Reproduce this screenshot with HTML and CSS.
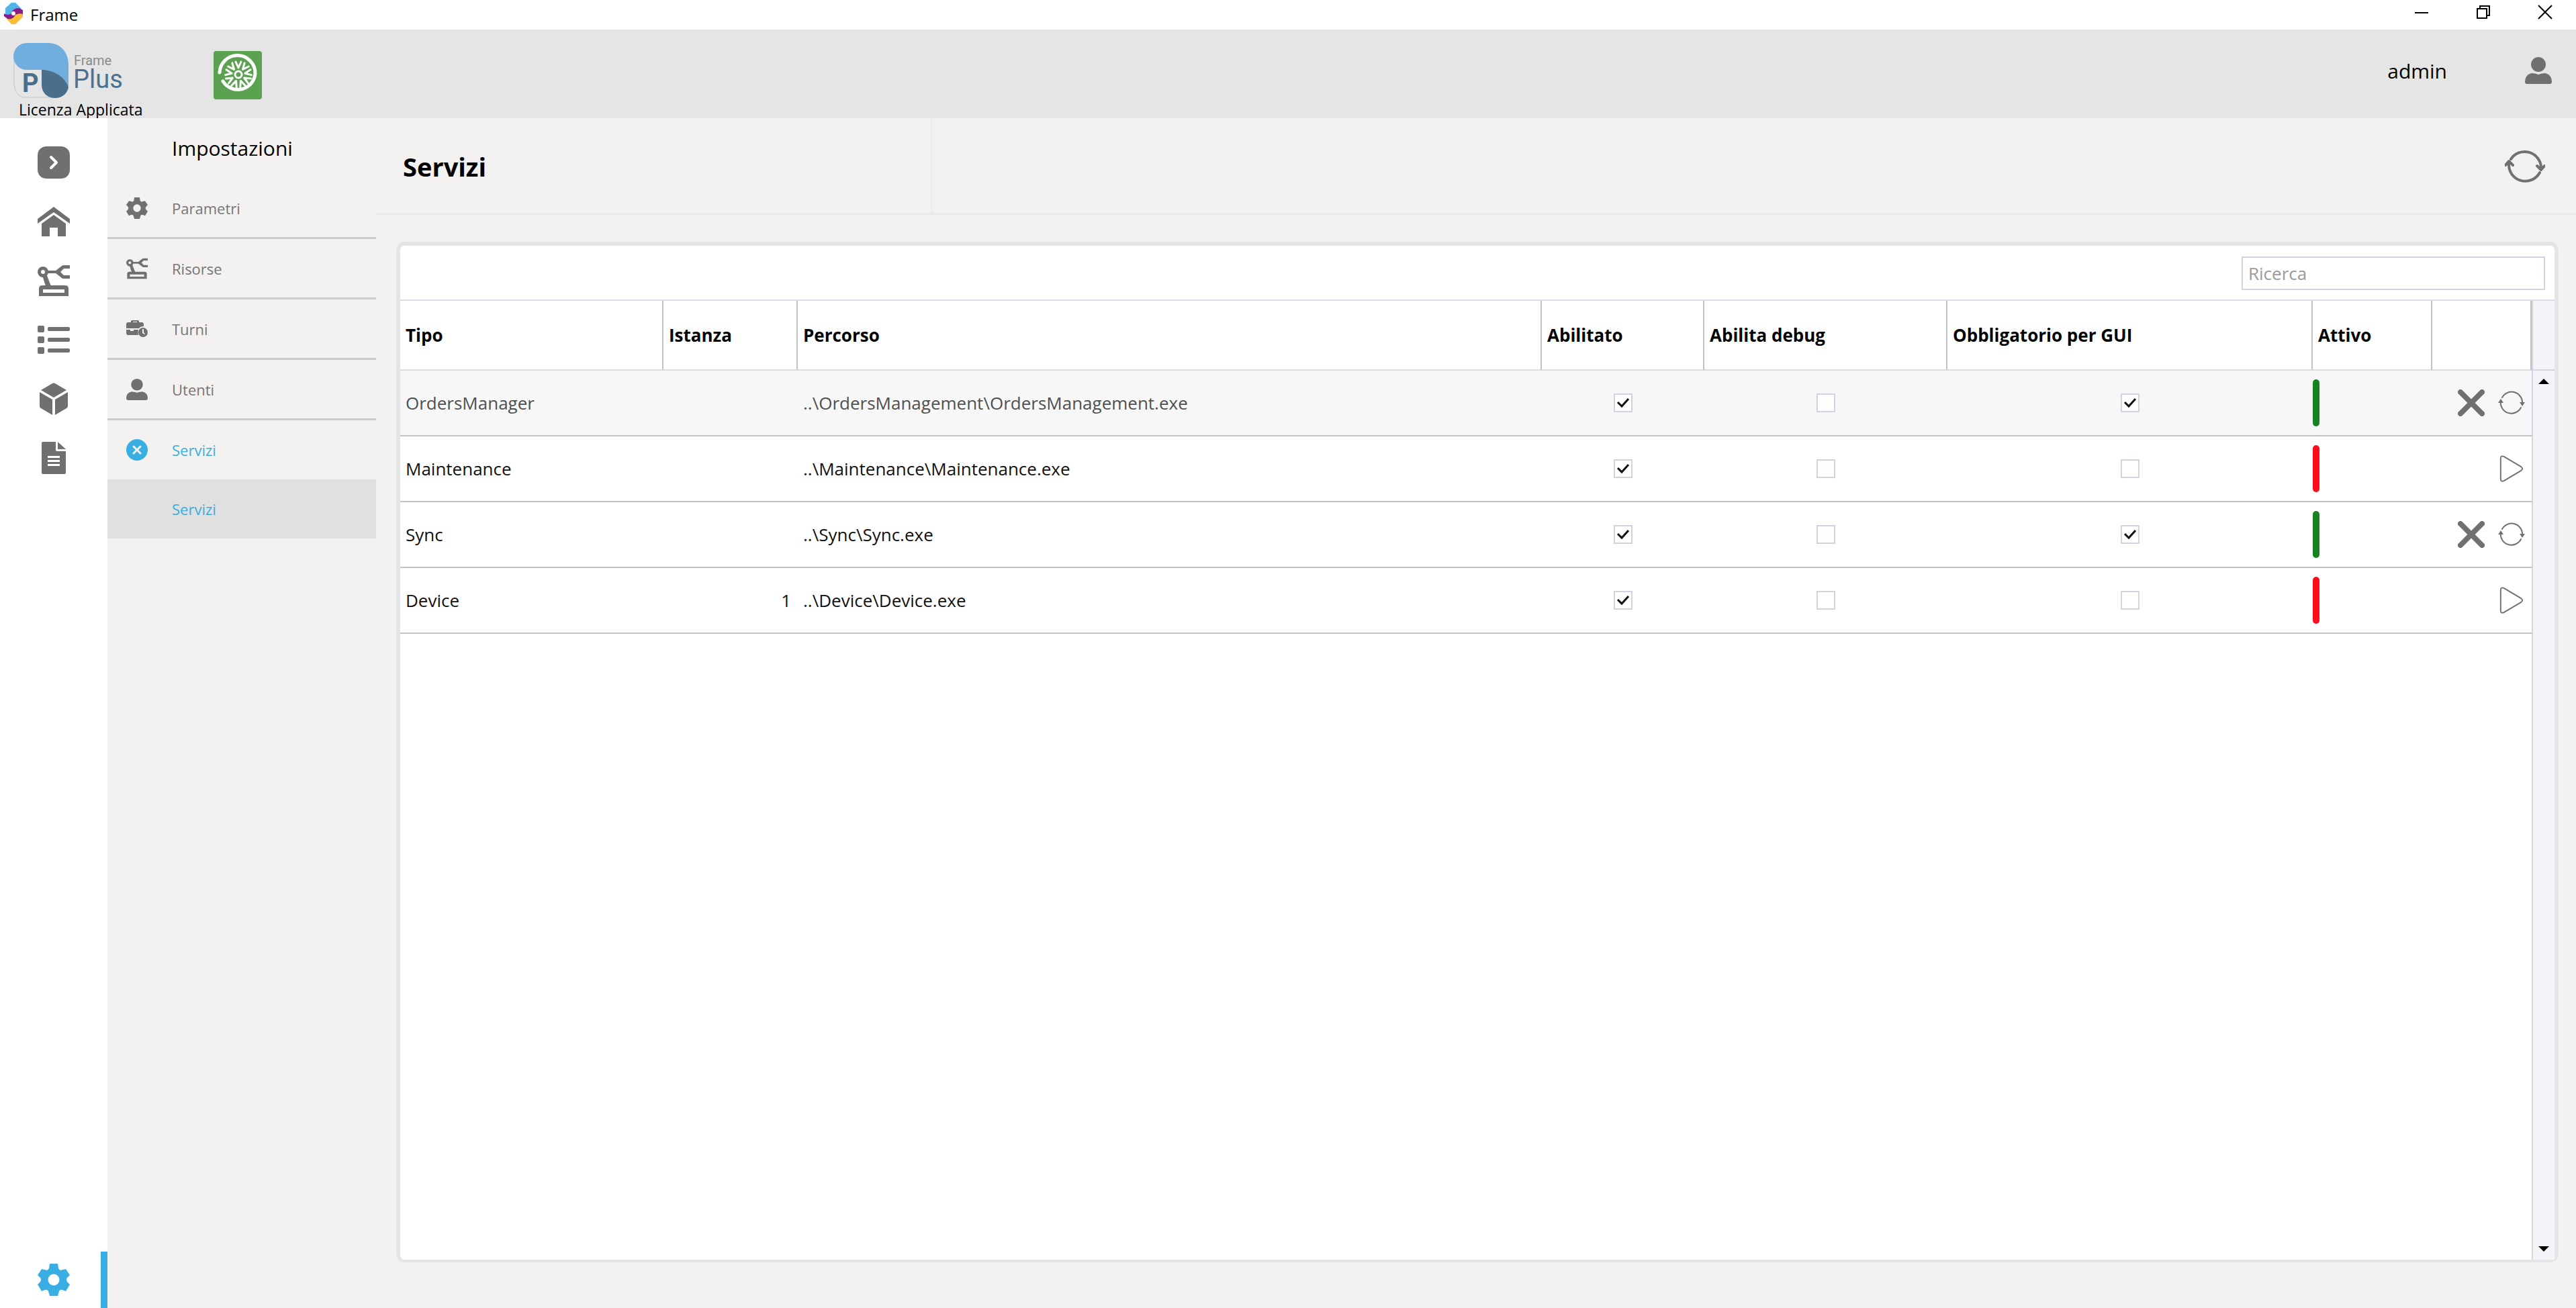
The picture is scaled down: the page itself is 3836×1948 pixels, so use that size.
FILE: index.html
```html
<!DOCTYPE html>
<html lang="it">
<head>
<meta charset="utf-8">
<title>Frame</title>
<link rel="stylesheet" href="styles.css">
</head>
<body>
<svg class="sprite" aria-hidden="true">
  <symbol id="gear" viewBox="0 0 48 48"><path fill-rule="evenodd" d="M18 0H30L31 7Q33 11 37 9L42 8L48 17L44 21Q42 24 44 27L48 31L42 41L37 39Q33 38 32 41L30 48H18L16 41Q15 38 11 39L6 41L0 31L4 27Q6 24 4 21L0 17L6 8L11 9Q15 11 17 7ZM24 15.500a8.500 8.500 0 1 0 0 17a8.500 8.500 0 1 0 0-17Z"/></symbol>
  <symbol id="home" viewBox="0 0 48 44"><path d="M24 0L48 18V25L24 8L0 25V18Z"/><path d="M24 12L42 25V44H30V31H18V44H6V25Z"/></symbol>
  <symbol id="robot" viewBox="0 0 48 46"><path d="M27 8L36 1Q37 0 39 0H48V5H39L34 10L39 15H48V20H39Q37 20 36 19L27 12Z"/><path d="M15 8H30V12H15Z"/><circle cx="8" cy="10" r="5.500" fill="none" stroke="currentColor" stroke-width="5"/><path d="M7 15L13 13L20 31H12Z"/><path fill-rule="evenodd" d="M7 30H41Q46 30 46 35V46H2V35Q2 30 7 30ZM8 36V41H40V36Z"/></symbol>
  <symbol id="list" viewBox="0 0 48 42"><rect width="10" height="10" rx="2"/><rect y="16" width="10" height="10" rx="2"/><rect y="32" width="10" height="10" rx="2"/><rect x="15" y="2" width="33" height="6" rx="2"/><rect x="15" y="18" width="33" height="6" rx="2"/><rect x="15" y="34" width="33" height="6" rx="2"/></symbol>
  <symbol id="cube" viewBox="0 0 42 48"><path d="M19 1Q21 0 23 1L40 11L21 22L2 11Z"/><path d="M0 14L19 25V48L2 38Q0 37 0 35Z"/><path d="M42 14L23 25V48L40 38Q42 37 42 35Z"/></symbol>
  <symbol id="doc" viewBox="0 0 36 48"><path fill-rule="evenodd" d="M2 0H21V12Q21 14 23 14H36V46Q36 48 34 48H2Q0 48 0 46V2Q0 0 2 0ZM9 21V24H27V21ZM9 27V30H27V27ZM9 33V36H27V33Z"/><path d="M24 0L36 11H24Z"/></symbol>
  <symbol id="user" viewBox="0 0 40 40"><circle cx="20" cy="11" r="11"/><path d="M10 24Q15 24 20 26Q25 24 30 24Q40 26 40 37Q40 40 37 40H3Q0 40 0 37Q0 26 10 24Z"/></symbol>
  <symbol id="shift" viewBox="0 0 32 32"><path fill-rule="evenodd" d="M7 6V4Q7 3 9 3H17Q19 3 19 4V6H23Q26 6 26 9V12Q21 12 19 15H0V9Q0 6 3 6ZM10 6H16V5H10Z"/><path d="M0 17H6V19H11V17H18Q17 21 18 25H3Q0 25 0 22Z"/><path fill-rule="evenodd" d="M25 14a7 7 0 1 0 0 14a7 7 0 1 0 0-14ZM24 16H26V21L28 23L27 24L24 22Z"/></symbol>
  <symbol id="refresh" viewBox="0 0 60 52"><path class="line" d="M9 16A24.500 24.500 0 0 1 54 29M52 36A24.500 24.500 0 0 1 6 23"/><path class="line" d="M48 26L54 32L59 26M1 25L6 19L12 25"/></symbol>
  <symbol id="restart" viewBox="0 0 40 36"><path class="line" d="M6 10A16 16 0 0 1 36 19M34 25A16 16 0 0 1 4 15"/><path d="M32 17L36 23L40 17ZM0 18L4 12L8 18Z"/></symbol>
  <symbol id="stop" viewBox="0 0 40 40"><path d="M4 4L36 36M36 4L4 36" fill="none" stroke="currentColor" stroke-width="8" stroke-linecap="round"/></symbol>
  <symbol id="play" viewBox="0 0 40 42"><path class="line" d="M3 5Q3 0 8 2L35 18Q39 21 35 24L8 40Q3 42 3 37Z"/></symbol>
</svg>

<header class="titlebar">
  <svg class="app-icon" viewBox="0 0 28 32"><path fill="#52b4e8" d="M11 0H17L26 9L12 20H2V8Z"/><path fill="#fbbd35" d="M11 32H17L28 21V13H18L4 24Z"/><path fill="#8a1a8c" d="M0 16Q6 20 11 16Q13 8 22 8L28 11V17Q22 15 17 18Q13 26 5 24L0 20Z"/><circle cx="14" cy="16" r="3" fill="#fff"/></svg>
  <h1 class="window-name">Frame</h1>
  <div class="window-buttons">
    <button class="window-button" aria-label="Riduci a icona"><svg viewBox="0 0 20 20"><path d="M0 11H20"/></svg></button>
    <button class="window-button" aria-label="Ripristina"><svg viewBox="0 0 20 20"><path d="M1 5H15V19H1ZM5 5V1H19V15H15"/></svg></button>
    <button class="window-button" aria-label="Chiudi"><svg viewBox="0 0 20 20"><path d="M0 0L20 20M20 0L0 20"/></svg></button>
  </div>
</header>

<div class="banner">
  <div class="brand">
    <svg class="logo" viewBox="0 0 168 82" role="img" aria-label="Frame Plus">
      <path d="M1 24V62Q2 76 14 81H60" fill="none" stroke="#bcc6cd" stroke-width="1"/>
      <path fill="#70aedf" d="M20 0H52C70 0 82 14 82 32V66C77 50 60 40 42 40H20A20 20 0 0 1 20 0Z"/>
      <path fill="#4b6f8b" d="M42 40C60 40 77 50 82 66C80 76 72 82 62 82C50 82 42 74 42 62Z"/>
      <text class="logo-p" x="13" y="73">P</text>
      <text class="logo-frame" x="90" y="33">Frame</text>
      <text class="logo-plus" x="89" y="67">Plus</text>
    </svg>
    <p class="license">Licenza Applicata</p>
  </div>
  <svg class="customer" viewBox="0 0 72 72" aria-hidden="true">
    <rect width="72" height="72" rx="4" fill="#5aa24f"/>
    <g fill="none" stroke="#fff" stroke-linecap="round" stroke-linejoin="round">
      <path stroke-width="5" d="M9 32A26 26 0 0 1 62 34A26 26 0 0 1 14 45"/>
      <circle cx="37" cy="35" r="5" stroke-width="3"/>
      <g stroke-width="3">
        <path id="spoke" d="M33 16L37 25L41 16"/>
        <use href="#spoke" transform="rotate(40 37 35)"/><use href="#spoke" transform="rotate(80 37 35)"/><use href="#spoke" transform="rotate(120 37 35)"/><use href="#spoke" transform="rotate(160 37 35)"/><use href="#spoke" transform="rotate(200 37 35)"/><use href="#spoke" transform="rotate(240 37 35)"/><use href="#spoke" transform="rotate(280 37 35)"/><use href="#spoke" transform="rotate(320 37 35)"/>
      </g>
    </g>
  </svg>
  <div class="account">
    <span>admin</span>
    <button class="plain" aria-label="Utente"><svg class="icon-40"><use href="#user"/></svg></button>
  </div>
</div>

<div class="workspace">
  <nav class="rail" aria-label="Principale">
    <button class="rail-item" aria-label="Espandi"><svg class="rail-icon" viewBox="0 0 48 48"><rect width="48" height="48" rx="13"/><path d="M20 16L28 24L20 32" fill="none" stroke="#fff" stroke-width="4" stroke-linecap="round" stroke-linejoin="round"/></svg></button>
    <button class="rail-item" aria-label="Home"><svg class="rail-icon"><use href="#home"/></svg></button>
    <button class="rail-item" aria-label="Risorse"><svg class="rail-icon"><use href="#robot"/></svg></button>
    <button class="rail-item" aria-label="Ordini"><svg class="rail-icon"><use href="#list"/></svg></button>
    <button class="rail-item" aria-label="Articoli"><svg class="rail-icon"><use href="#cube"/></svg></button>
    <button class="rail-item" aria-label="Rapporti"><svg class="rail-icon"><use href="#doc"/></svg></button>
    <button class="rail-item rail-item-active" aria-label="Impostazioni"><svg class="rail-icon"><use href="#gear"/></svg></button>
  </nav>

  <nav class="menu" aria-labelledby="menu-title">
    <h2 class="menu-title" id="menu-title">Impostazioni</h2>
    <a class="menu-item" href="#"><svg class="menu-icon"><use href="#gear"/></svg>Parametri</a>
    <a class="menu-item" href="#"><svg class="menu-icon"><use href="#robot"/></svg>Risorse</a>
    <a class="menu-item" href="#"><svg class="menu-icon"><use href="#shift"/></svg>Turni</a>
    <a class="menu-item" href="#"><svg class="menu-icon"><use href="#user"/></svg>Utenti</a>
    <a class="menu-item menu-open" href="#"><svg class="menu-icon" viewBox="0 0 32 32"><circle cx="16" cy="16" r="16"/><path d="M11 11L21 21M21 11L11 21" stroke="#f3f2f0" stroke-width="3" stroke-linecap="round"/></svg>Servizi</a>
    <a class="menu-item menu-open menu-child" href="#" aria-current="page">Servizi</a>
  </nav>

  <main class="content">
    <div class="page-head">
      <h2 class="page-title">Servizi</h2>
      <button class="plain reload" aria-label="Aggiorna"><svg class="icon-reload"><use href="#refresh"/></svg></button>
    </div>

    <section class="card">
      <div class="toolbar"><input class="search" type="text" placeholder="Ricerca" aria-label="Ricerca"></div>
      <div class="grid">
        <div class="grid-body">
          <table class="services">
            <colgroup><col class="w-type"><col class="w-instance"><col><col class="w-enabled"><col class="w-debug"><col class="w-gui"><col class="w-active"><col class="w-actions"></colgroup>
            <thead>
              <tr><th>Tipo</th><th>Istanza</th><th>Percorso</th><th>Abilitato</th><th>Abilita debug</th><th>Obbligatorio per GUI</th><th>Attivo</th><th></th></tr>
            </thead>
            <tbody>
              <tr class="selected">
                <td>OrdersManager</td><td class="number"></td><td>..\OrdersManagement\OrdersManagement.exe</td>
                <td class="check"><input type="checkbox" aria-label="Abilitato" checked></td>
                <td class="check"><input type="checkbox" aria-label="Abilita debug"></td>
                <td class="check"><input type="checkbox" aria-label="Obbligatorio per GUI" checked></td>
                <td class="state"><span class="pill pill-on"></span></td>
                <td><div class="actions"><button class="plain" aria-label="Ferma"><svg class="icon-40"><use href="#stop"/></svg></button><button class="plain" aria-label="Riavvia"><svg class="icon-40"><use href="#restart"/></svg></button></div></td>
              </tr>
              <tr>
                <td>Maintenance</td><td class="number"></td><td>..\Maintenance\Maintenance.exe</td>
                <td class="check"><input type="checkbox" aria-label="Abilitato" checked></td>
                <td class="check"><input type="checkbox" aria-label="Abilita debug"></td>
                <td class="check"><input type="checkbox" aria-label="Obbligatorio per GUI"></td>
                <td class="state"><span class="pill pill-off"></span></td>
                <td><div class="actions"><button class="plain" aria-label="Avvia"><svg class="icon-40"><use href="#play"/></svg></button></div></td>
              </tr>
              <tr>
                <td>Sync</td><td class="number"></td><td>..\Sync\Sync.exe</td>
                <td class="check"><input type="checkbox" aria-label="Abilitato" checked></td>
                <td class="check"><input type="checkbox" aria-label="Abilita debug"></td>
                <td class="check"><input type="checkbox" aria-label="Obbligatorio per GUI" checked></td>
                <td class="state"><span class="pill pill-on"></span></td>
                <td><div class="actions"><button class="plain" aria-label="Ferma"><svg class="icon-40"><use href="#stop"/></svg></button><button class="plain" aria-label="Riavvia"><svg class="icon-40"><use href="#restart"/></svg></button></div></td>
              </tr>
              <tr>
                <td>Device</td><td class="number">1</td><td>..\Device\Device.exe</td>
                <td class="check"><input type="checkbox" aria-label="Abilitato" checked></td>
                <td class="check"><input type="checkbox" aria-label="Abilita debug"></td>
                <td class="check"><input type="checkbox" aria-label="Obbligatorio per GUI"></td>
                <td class="state"><span class="pill pill-off"></span></td>
                <td><div class="actions"><button class="plain" aria-label="Avvia"><svg class="icon-40"><use href="#play"/></svg></button></div></td>
              </tr>
            </tbody>
          </table>
        </div>
        <div class="scrollbar">
          <div class="scroll-corner"></div>
          <button class="scroll-arrow" aria-label="Scorri su"><svg viewBox="0 0 16 8"><path d="M0 8L8 0L16 8Z"/></svg></button>
          <button class="scroll-arrow scroll-down" aria-label="Scorri giù"><svg viewBox="0 0 16 8"><path d="M0 0L8 8L16 0Z"/></svg></button>
        </div>
      </div>
    </section>
  </main>
</div>
</body>
</html>
```
FILE: styles.css
```css
* {
  box-sizing: border-box;
}

body {
  margin: 0;
  height: 100vh;
  display: flex;
  flex-direction: column;
  background: #fff;
  color: #000;
  font-family: "Open Sans", "Noto Sans", sans-serif;
  font-size: 26px;
}

h1, h2, p {
  margin: 0;
  font-weight: 400;
}

button {
  padding: 0;
  border: 0;
  background: none;
  color: #707070;
}

svg {
  display: block;
  fill: currentColor;
}

.sprite {
  position: absolute;
  width: 0;
  height: 0;
}

.line {
  fill: none;
  stroke: currentColor;
  stroke-width: 2;
  stroke-linecap: round;
  stroke-linejoin: round;
}

#refresh .line {
  stroke-width: 4;
}

.icon-40 {
  width: 40px;
  height: 40px;
}

.icon-reload {
  width: 60px;
  height: 52px;
}

/* Window title bar */
.titlebar {
  display: flex;
  align-items: center;
  height: 44px;
  padding-left: 6px;
}

.app-icon {
  width: 28px;
  height: 32px;
  margin: 0 11px 4px 0;
}

.window-name {
  font-size: 24px;
  line-height: 44px;
}

.window-buttons {
  display: flex;
  margin-left: auto;
}

.window-button {
  display: flex;
  justify-content: center;
  width: 92px;
  height: 28px;
}

.window-button svg {
  width: 20px;
  height: 20px;
  overflow: visible;
  fill: none;
  stroke: #000;
  stroke-width: 2;
}

/* Banner */
.banner {
  display: flex;
  align-items: flex-start;
  height: 132px;
  padding: 0 36px 0 20px;
  background: #e5e5e5;
}

.brand {
  width: 298px;
  padding-top: 20px;
}

.logo {
  width: 168px;
  height: 82px;
  overflow: visible;
  font-family: Roboto, "Open Sans", sans-serif;
}

.logo-p {
  font-size: 38px;
  font-weight: 700;
  fill: #4b6f8b;
}

.logo-frame {
  font-size: 20px;
  fill: #8a8a8a;
}

.logo-plus {
  font-size: 38px;
  fill: #4a7391;
}

.license {
  padding-left: 8px;
  font-size: 23px;
  line-height: 34px;
}

.customer {
  width: 72px;
  height: 72px;
  margin-top: 32px;
}

.account {
  display: flex;
  align-items: center;
  gap: 116px;
  height: 122px;
  margin-left: auto;
  font-size: 30px;
}

/* Icon rail */
.workspace {
  display: flex;
  flex: 1;
  min-height: 0;
}

.rail {
  display: flex;
  flex-direction: column;
  width: 160px;
  padding-top: 22px;
  background: #fff;
}

.rail-item {
  display: flex;
  align-items: center;
  justify-content: center;
  height: 88px;
}

.rail-item-active {
  height: 84px;
  margin-top: auto;
  padding-left: 10px;
  border-right: 10px solid #39aee2;
  color: #39aee2;
}

.rail-icon {
  width: 48px;
  height: 48px;
}

/* Settings menu */
.menu {
  width: 400px;
  background: #f3f2f0;
}

.menu-title {
  padding-left: 96px;
  font-size: 30px;
  line-height: 90px;
}

.menu-item {
  display: flex;
  align-items: center;
  gap: 36px;
  height: 90px;
  padding-left: 28px;
  border-bottom: 3px solid #cacaca;
  color: #767676;
  font-size: 22px;
  text-decoration: none;
}

.menu-icon {
  width: 32px;
  height: 32px;
  color: #707070;
}

.menu-open,
.menu-open .menu-icon {
  color: #39aee2;
}

.menu-open {
  height: 88px;
  border-bottom: 0;
}

.menu-child {
  padding-left: 96px;
  background: #e0e0e0;
}

/* Content */
.content {
  display: flex;
  flex: 1;
  flex-direction: column;
  min-width: 0;
  background: #f3f2f0;
}

.page-head {
  display: flex;
  align-items: center;
  justify-content: space-between;
  height: 144px;
  padding-right: 46px;
  border-bottom: 3px solid #eaeae9;
}

.page-title {
  width: 828px;
  padding: 4px 0 0 40px;
  border-right: 2px solid #ececeb;
  font-size: 38px;
  font-weight: 700;
  line-height: 137px;
}

.card {
  display: flex;
  flex: 1;
  flex-direction: column;
  min-height: 0;
  margin: 40px 26px 68px 30px;
  border: 6px solid #e5e5e5;
  border-bottom-width: 4px;
  border-radius: 12px;
  background: #fff;
}

.toolbar {
  display: flex;
  justify-content: flex-end;
  height: 82px;
  padding: 16px 14px 0;
  border-bottom: 2px solid #dcdce6;
}

.search {
  width: 452px;
  height: 50px;
  padding: 0 8px;
  border: 2px solid #d3d3e0;
  border-radius: 0;
  background: #fff;
  font: inherit;
}

.search::placeholder {
  color: #9a9a9a;
  opacity: 1;
}

.grid {
  display: flex;
  flex: 1;
  min-height: 0;
}

.grid-body {
  flex: 1;
  min-width: 0;
}

.services {
  width: 100%;
  border-spacing: 0;
  table-layout: fixed;
}

.w-type { width: 392px; }
.w-instance { width: 200px; }
.w-enabled { width: 242px; }
.w-debug { width: 362px; }
.w-gui { width: 544px; }
.w-active { width: 178px; }
.w-actions { width: 148px; }

.services th {
  height: 104px;
  padding: 0 8px;
  border-right: 2px solid #c2c2c2;
  border-bottom: 2px solid #dcdcdc;
  font-weight: 700;
  text-align: left;
}

.services td {
  height: 98px;
  padding: 0 10px 0 8px;
  border-bottom: 2px solid #c2c2c2;
  color: #111;
}

.selected td {
  background: #f7f7f7;
  color: #505050;
}

.services .number {
  text-align: right;
}

.services .check,
.services .state {
  padding: 0;
}

.check input {
  display: block;
  width: 28px;
  height: 28px;
  margin: 0 auto;
  border: 2px solid #d3d3e0;
  appearance: none;
  background: #fff;
}

.check input:checked {
  background: #fff url("data:image/svg+xml,%3Csvg xmlns='http://www.w3.org/2000/svg' viewBox='0 0 24 24'%3E%3Cpath d='M4 11L10 17L20 6' fill='none' stroke='%23111' stroke-width='3'/%3E%3C/svg%3E");
}

.pill {
  display: block;
  width: 10px;
  height: 70px;
  border-radius: 5px;
}

.pill-on { background: #178220; }
.pill-off { background: #fd0d1b; }

.actions {
  display: flex;
  justify-content: flex-end;
  gap: 20px;
}

.scrollbar {
  display: flex;
  flex-direction: column;
  width: 34px;
  border-left: 2px solid #d2d4e0;
  background: #f3f4f8;
}

.scroll-corner {
  height: 104px;
  border-bottom: 2px solid #d2d4e0;
}

.scroll-arrow {
  display: flex;
  align-items: center;
  justify-content: center;
  height: 32px;
  color: #000;
}

.scroll-arrow svg {
  width: 16px;
  height: 8px;
}

.scroll-down {
  margin-top: auto;
}
```
